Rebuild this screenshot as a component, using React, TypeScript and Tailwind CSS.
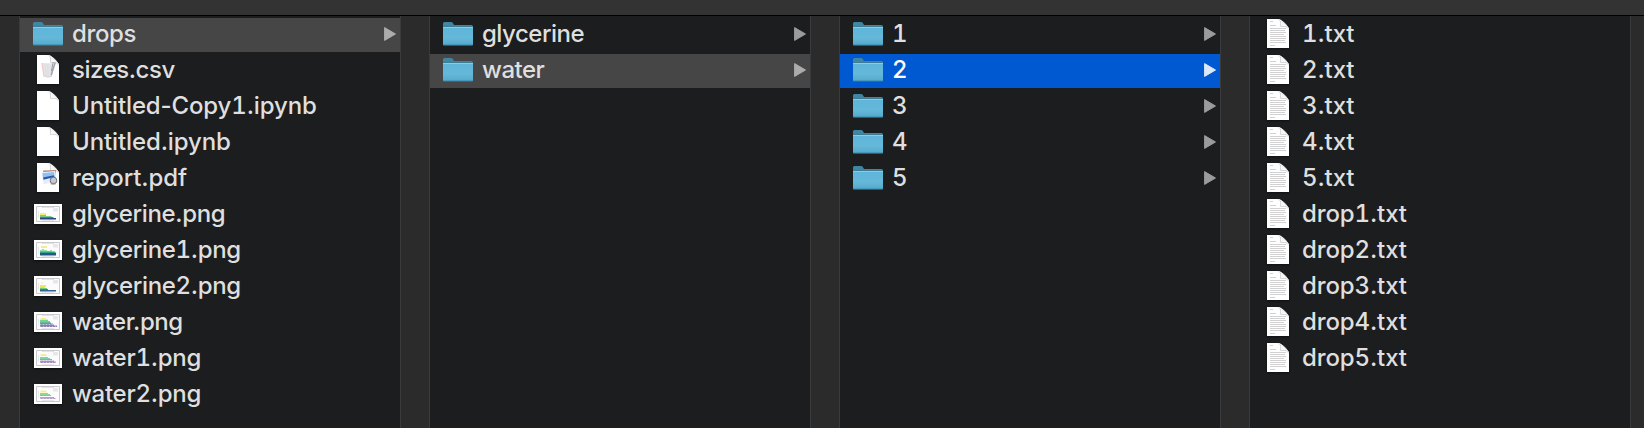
type Kind = 'folder' | 'blank' | 'csv' | 'pdf' | 'txt' | 'glycerine' | 'glycerine1' | 'glycerine2' | 'water' | 'water1' | 'water2';

interface Entry {
  name: string;
  kind: Kind;
  tracking?: string;
  state?: 'path' | 'active';
}

const columns: Entry[][] = [
  [
    { name: 'drops', kind: 'folder', state: 'path', tracking: 'tracking-[-0.35px]' },
    { name: 'sizes.csv', kind: 'csv', tracking: 'tracking-[-0.45px]' },
    { name: 'Untitled-Copy1.ipynb', kind: 'blank', tracking: 'tracking-[-0.13px]' },
    { name: 'Untitled.ipynb', kind: 'blank', tracking: 'tracking-[-0.12px]' },
    { name: 'report.pdf', kind: 'pdf', tracking: 'tracking-[-0.13px]' },
    { name: 'glycerine.png', kind: 'glycerine', tracking: 'tracking-[-0.36px]' },
    { name: 'glycerine1.png', kind: 'glycerine1', tracking: 'tracking-[-0.33px]' },
    { name: 'glycerine2.png', kind: 'glycerine2', tracking: 'tracking-[-0.33px]' },
    { name: 'water.png', kind: 'water', tracking: 'tracking-[-0.45px]' },
    { name: 'water1.png', kind: 'water1', tracking: 'tracking-[-0.28px]' },
    { name: 'water2.png', kind: 'water2', tracking: 'tracking-[-0.28px]' },
  ],
  [
    { name: 'glycerine', kind: 'folder', tracking: 'tracking-[-0.5px]' },
    { name: 'water', kind: 'folder', state: 'path', tracking: 'tracking-[-0.5px]' },
  ],
  [
    { name: '1', kind: 'folder' },
    { name: '2', kind: 'folder', state: 'active' },
    { name: '3', kind: 'folder' },
    { name: '4', kind: 'folder' },
    { name: '5', kind: 'folder' },
  ],
  ['1.txt', '2.txt', '3.txt', '4.txt', '5.txt', 'drop1.txt', 'drop2.txt', 'drop3.txt', 'drop4.txt', 'drop5.txt'].map(
    (name): Entry => ({ name, kind: 'txt', tracking: 'tracking-[-0.12px]' }),
  ),
];

function Folder() {
  return (
    <svg width="30" height="24" viewBox="0 0 30 24" className="shrink-0">
      <path d="M0 5V1.5Q0 0 1.5 0H8Q9.3 0 10 1.3L11 3H28.5Q30 3 30 4.5V8H0Z" fill="#3f86a3" />
      <path d="M0 4.6H30V22.4Q30 23.8 28.8 23.8H1.2Q0 23.8 0 22.4Z" fill="#3b7288" />
      <path d="M0 5H30V22Q30 23 29 23H1Q0 23 0 22Z" fill="url(#folderFace)" />
      <path d="M0 5.5H30" stroke="#83cfe9" />
      <path d="M0.5 22.5H29.5" stroke="#4699ba" />
    </svg>
  );
}

const textLines = [
  [3, 2.5, 3], [3, 6.5, 6], [3, 9.5, 16], [3, 11.5, 15], [3, 13.5, 16], [3, 15.5, 14],
  [3, 17.5, 16], [3, 19.5, 16], [3, 21.5, 15], [3, 23.5, 16], [3, 26.5, 5],
];

function Page({ kind }: { kind: Kind }) {
  return (
    <svg width="22" height="29" viewBox="0 0 22 29" className="shrink-0 drop-shadow-[0_1px_1px_rgba(0,0,0,0.5)]">
      <path d="M0 0H11.5C14 0 22 7.5 22 10V29H0Z" fill="#fff" />
      <path d="M10 0H11.5C14 0 22 7.5 22 10V11Z" fill="url(#pageFold)" />
      <path d="M13.5 1.2V7.5H20Z" fill="#f8f8f8" />
      <path d="M13.5 2V7.5H19.5" fill="none" stroke="#c9c9c9" strokeWidth="0.7" />
      {kind === 'txt' &&
        textLines.map(([x, y, w]) => (
          <path key={y} d={`M${x} ${y}h${w}`} stroke="#cccccc" strokeWidth="0.9" />
        ))}
      {kind === 'csv' && (
        <g>
          <path d="M5 8L17 8.5L15.3 21.5Q11 23.5 7 21.3Z" fill="#e4e4e6" />
          <path d="M5 8L7 21.3" stroke="#f1cbc8" strokeWidth="1.3" />
          <path d="M8 9L9 20M11 9V21" stroke="#dbdbdf" strokeWidth="0.7" />
          <path d="M18.2 7.5L14.2 20" stroke="#9aa6b0" strokeWidth="1.5" />
          <path d="M16.2 7L14.4 16" stroke="#85898d" strokeWidth="0.8" />
          <path d="M7 21Q11 23.2 15 21" fill="none" stroke="#cfcfd1" strokeWidth="0.8" />
        </g>
      )}
      {kind === 'pdf' && (
        <g>
          <path d="M6 7.5L19 7L18 15L7 14Z" fill="#ba896f" />
          <path d="M4.5 9.3L18 7.9L19.5 18L6.5 21.5Z" fill="#e8eef8" />
          <path d="M5.4 10.3L17 9L17.5 14.2L6.2 15.5Z" fill="#92bff5" />
          <path d="M6.1 14.6L17 12.2L17.5 14L6.5 16.8Z" fill="#2858ad" />
          <circle cx="16.5" cy="17.5" r="3.3" fill="#c3cad1" stroke="#68727c" />
          <path d="M13.8 20.8L18.5 20.6" stroke="#a1877b" strokeWidth="1.6" />
        </g>
      )}
    </svg>
  );
}

const bands: Record<string, [string, string][]> = {
  glycerine: [
    ['M6 9h6v2H6z', '#f7ed73'],
    ['M6 11h6v1h5l1 1H6z', '#75cf83'],
    ['M6 13h13l1 1H6z', '#2b9186'],
    ['M6 14h16v1.5H6z', '#2c4783'],
  ],
  glycerine1: [
    ['M7 6h6v2H7z', '#f5ed8a'],
    ['M6 10h2v-1h2v1h3v1h3v-1h2v2H6z', '#99dcab'],
    ['M6 11.5h15l1 1.5H6z', '#34a57d'],
    ['M6 13h16v2.5H6z', '#25568c'],
  ],
  glycerine2: [
    ['M7 6h3v2H7z', '#fbf8cf'],
    ['M6 9h6v2H6z', '#f2e65f'],
    ['M6 11.5h5v.5h2v1H6z', '#6ccc79'],
    ['M6 13h8v1H6z', '#2b9186'],
    ['M6 14h16v1.5H6z', '#326291'],
  ],
  water: [
    ['M7 6h5v1h2v1H6z', '#f6ec7d'],
    ['M6 8h8v1h2v2H6z', '#73d391'],
    ['M6 10.5h11v1h2v1H6z', '#53a6a1'],
    ['M6 12.5h14v1h3v1.5H6z', '#8c7db7'],
  ],
  water1: [
    ['M7 6h5v1h1v1H6z', '#f8ee8c'],
    ['M6 9h8v1h2v1H6z', '#7bd6ab'],
    ['M6 11h12v1H6z', '#7dafc1'],
    ['M6 12.5h14v1h2v1.5H6z', '#a48fc0'],
  ],
  water2: [
    ['M7 6.5h5v1h1v1H6z', '#f7ed85'],
    ['M6 9h8v1h2v1H6z', '#8bd6a4'],
    ['M6 11h11v1H6z', '#85bbc5'],
    ['M6 13h14v1h2v1H6z', '#b39fca'],
  ],
};

function ChartThumb({ kind }: { kind: Kind }) {
  return (
    <svg width="28" height="20" viewBox="0 0 28 20" className="ml-px shrink-0 drop-shadow-[0_1px_1px_rgba(0,0,0,0.6)]">
      <path d="M0 0H28V20H0Z" fill="#fff" />
      <path d="M2.5 2.5H25.5V17.5H2.5Z" fill="#fcfcfc" stroke="#c8c9cb" />
      <path d="M8 3.5H20" stroke="#dedede" strokeDasharray="2 0.5" />
      <path d="M19 4h5v3.5h-5z" fill="#e6e6eb" />
      {bands[kind].map(([d, fill]) => (
        <path key={fill} d={d} fill={fill} />
      ))}
      {kind.startsWith('water') && (
        <path d="M6 12.5H22M6 14.5H23" stroke="#fff" strokeWidth="0.8" strokeDasharray="1 2" opacity="0.5" />
      )}
      <path d="M4.5 7V14M8 16.5H20" stroke="#dadade" strokeWidth="0.6" />
    </svg>
  );
}

function Icon({ kind }: { kind: Kind }) {
  if (kind === 'folder') {
    return (
      <div className="-mt-0.5">
        <Folder />
      </div>
    );
  }
  if (kind === 'txt' || kind === 'csv' || kind === 'pdf' || kind === 'blank') {
    return (
      <div className="-mt-[3px] ml-1">
        <Page kind={kind} />
      </div>
    );
  }
  return (
    <div className="-mt-0.5">
      <ChartThumb kind={kind} />
    </div>
  );
}

const rowStyles = {
  plain: 'text-[#dfdfdf]',
  path: 'bg-[#464646] text-[#dfdfdf]',
  active: 'bg-[#0059d0] text-white',
};

const arrowStyles = {
  plain: 'text-[#9a9b9b]',
  path: 'text-[#acacac]',
  active: 'text-[#dce8f8]',
};

function Row({ entry }: { entry: Entry }) {
  const state = entry.state ?? 'plain';
  return (
    <li className={`flex h-[34px] items-center pr-1 pl-[13px] ${rowStyles[state]}`}>
      <div className="flex h-full w-[39px] shrink-0 items-center [&>div]:flex">
        <Icon kind={entry.kind} />
      </div>
      <span
        className={`-mt-[3px] flex-1 text-[24px] leading-[34px] font-[450] whitespace-nowrap ${entry.tracking ?? ''}`}
      >
        {entry.name.split(/(\d)/).map((part, i) =>
          i % 2 ? (
            <span key={i} className="tabular-nums">
              {part}
            </span>
          ) : (
            part
          ),
        )}
      </span>
      {entry.kind === 'folder' && (
        <svg width="12" height="14" viewBox="0 0 12 14" className={`-mt-0.5 shrink-0 ${arrowStyles[state]}`}>
          <path d="M0.6 0.6L11.5 7L0.6 13.4Z" fill="currentColor" stroke="currentColor" strokeWidth="1" strokeLinejoin="round" />
        </svg>
      )}
    </li>
  );
}

export default function App() {
  return (
    <div className="flex h-[428px] w-[1644px] flex-col overflow-hidden bg-[#1c1d1e] font-['Inter','Liberation_Sans',sans-serif]">
      <svg width="0" height="0" className="absolute">
        <defs>
          <linearGradient id="folderFace" x1="0" y1="0" x2="0" y2="1">
            <stop offset="0" stopColor="#5fb5da" />
            <stop offset="0.6" stopColor="#64b8d8" />
            <stop offset="1" stopColor="#55a9cb" />
          </linearGradient>
          <linearGradient id="pageFold" x1="0" y1="1" x2="1" y2="0">
            <stop offset="0" stopColor="#fff" />
            <stop offset="1" stopColor="#d5d5d5" />
          </linearGradient>
        </defs>
      </svg>
      <div className="h-4 shrink-0 border-b border-black bg-[#333333]" />
      <div className="flex min-h-0 flex-1">
        <div className="w-5 shrink-0 border-r border-[#3a3b3c] bg-[#2b2b2b]" />
        {columns.map((entries, i) => (
          <div key={i} className="flex shrink-0">
            <ul className="flex w-[380px] flex-col gap-0.5 pt-0.5">
              {entries.map((entry) => (
                <Row key={entry.name} entry={entry} />
              ))}
            </ul>
            <div className="w-[30px] border-x border-[#3a3b3c] bg-[#2b2b2b]" />
          </div>
        ))}
      </div>
    </div>
  );
}
